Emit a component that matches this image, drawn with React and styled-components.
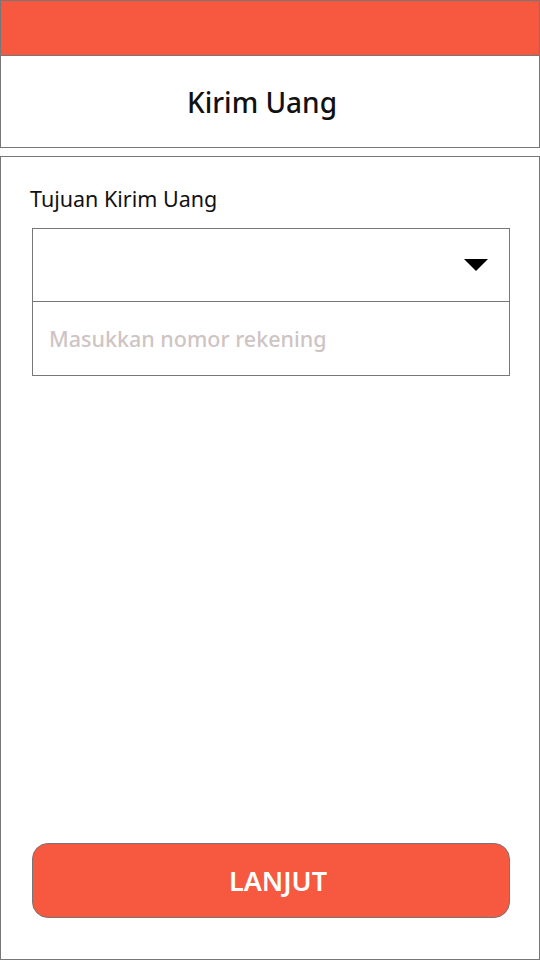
import React from 'react';
import styled, { createGlobalStyle } from 'styled-components';

const GlobalStyle = createGlobalStyle`
  * { box-sizing: border-box; }
  body {
    margin: 0;
    background: #fff;
    font-family: "Noto Sans", "Open Sans", sans-serif;
  }
`;

const Screen = styled.div`
  width: 540px;
  height: 960px;
  display: flex;
  flex-direction: column;
`;

const StatusBar = styled.div`
  height: 56px;
  background: #f65840;
  border: 1px solid #777;
`;

const Header = styled.div`
  height: 92px;
  border: 1px solid #777;
  border-top: none;
  display: flex;
  align-items: center;
  justify-content: center;
  padding-right: 16px;
`;

const Title = styled.h1`
  margin: 0;
  font-size: 28px;
  font-weight: 500;
  color: #111;
`;

const Body = styled.div`
  flex: 1;
  margin-top: 8px;
  border: 1px solid #777;
  padding: 27px 29px 41px 31px;
  display: flex;
  flex-direction: column;
`;

const Label = styled.div`
  font-size: 21.5px;
  line-height: 30px;
  color: #111;
  margin: 0 0 14px -2px;
`;

const Field = styled.div`
  height: ${p => p.h}px;
  border: 1px solid #777;
  border-top: ${p => (p.joined ? 'none' : '1px solid #777')};
  display: flex;
  align-items: center;
  justify-content: space-between;
  padding: 0 21px 0 16px;
`;

const Placeholder = styled.span`
  font-size: 21.5px;
  font-weight: 500;
  color: #cfc4c4;
`;

const Caret = styled.svg`
  width: 24px;
  height: 12px;
`;

const Button = styled.button`
  margin-top: auto;
  height: 75px;
  padding: 0 0 0 14px;
  border: 1px solid #777;
  border-radius: 16px;
  background: #f65840;
  color: #fff;
  font-family: inherit;
  font-size: 27px;
  font-weight: 600;
`;

export default function App() {
  return (
    <>
      <GlobalStyle />
      <Screen>
        <StatusBar />
        <Header>
          <Title>Kirim Uang</Title>
        </Header>
        <Body>
          <Label>Tujuan Kirim Uang</Label>
          <Field h={74}>
            <span />
            <Caret viewBox="0 0 24 12">
              <path d="M0 0 H24 L12 12 Z" fill="#000" />
            </Caret>
          </Field>
          <Field h={74} joined>
            <Placeholder>Masukkan nomor rekening</Placeholder>
          </Field>
          <Button>LANJUT</Button>
        </Body>
      </Screen>
    </>
  );
}
